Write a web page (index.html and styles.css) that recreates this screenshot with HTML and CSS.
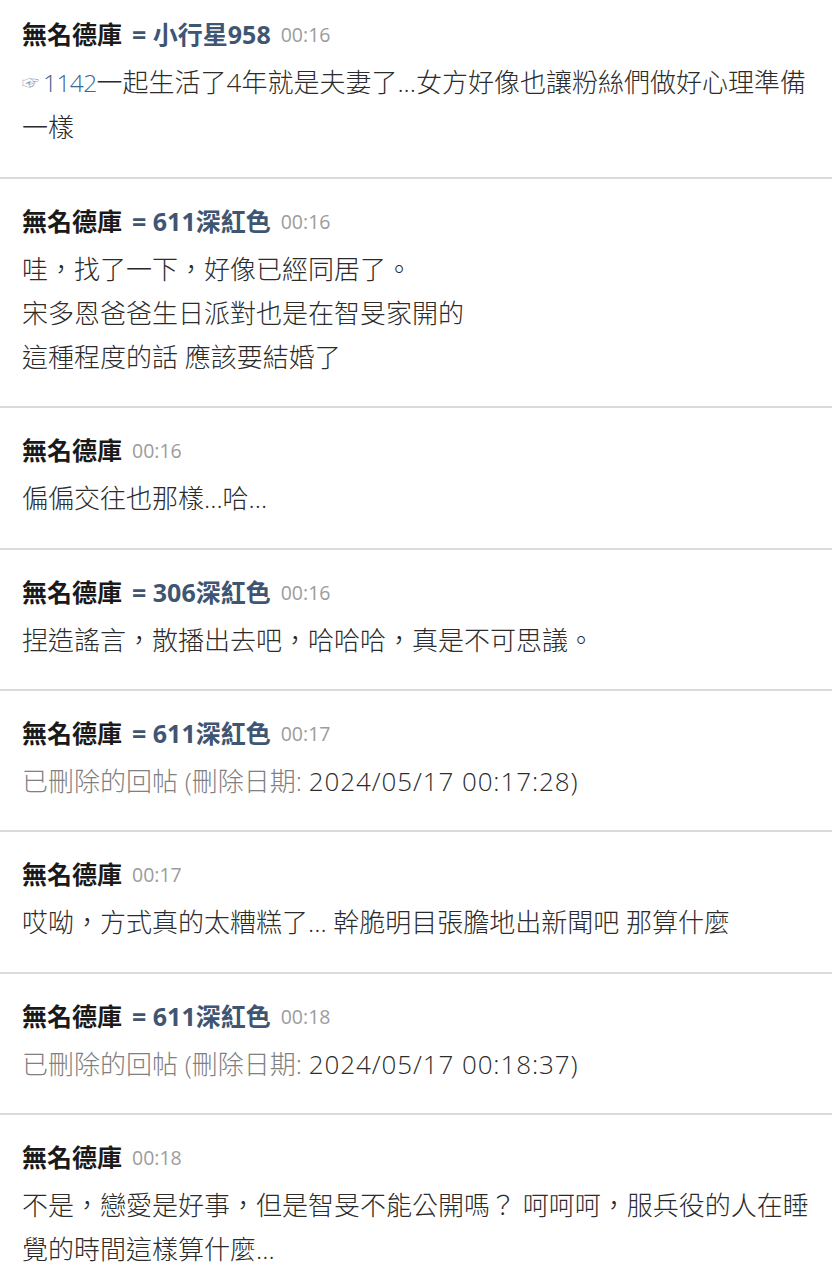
FILE: index.html
```html
<!DOCTYPE html>
<html lang="zh-TW">
<head>
<meta charset="utf-8">
<link rel="stylesheet" href="styles.css">
</head>
<body>
<ul class="comments">
  <li class="comment first">
    <div class="head"><span class="author">無名德庫</span><span class="nick">= 小行星958</span><span class="time">00:16</span></div>
    <div class="body"><span class="hand">☞</span><span class="reply">1142</span>一起生活了4年就是夫妻了...女方好像也讓粉絲們做好心理準備一樣</div>
  </li>
  <li class="comment">
    <div class="head"><span class="author">無名德庫</span><span class="nick">= 611深紅色</span><span class="time">00:16</span></div>
    <div class="body">哇，找了一下，好像已經同居了。<br>宋多恩爸爸生日派對也是在智旻家開的<br>這種程度的話 應該要結婚了</div>
  </li>
  <li class="comment">
    <div class="head"><span class="author">無名德庫</span><span class="time">00:16</span></div>
    <div class="body">偏偏交往也那樣...哈...</div>
  </li>
  <li class="comment">
    <div class="head"><span class="author">無名德庫</span><span class="nick">= 306深紅色</span><span class="time">00:16</span></div>
    <div class="body">捏造謠言，散播出去吧，哈哈哈，真是不可思議。</div>
  </li>
  <li class="comment">
    <div class="head"><span class="author">無名德庫</span><span class="nick">= 611深紅色</span><span class="time">00:17</span></div>
    <div class="body deleted">已刪除的回帖 (刪除日期: <span class="date">2024/05/17 00:17:28)</span></div>
  </li>
  <li class="comment">
    <div class="head"><span class="author">無名德庫</span><span class="time">00:17</span></div>
    <div class="body">哎呦，方式真的太糟糕了... 幹脆明目張膽地出新聞吧 那算什麼</div>
  </li>
  <li class="comment">
    <div class="head"><span class="author">無名德庫</span><span class="nick">= 611深紅色</span><span class="time">00:18</span></div>
    <div class="body deleted">已刪除的回帖 (刪除日期: <span class="date">2024/05/17 00:18:37)</span></div>
  </li>
  <li class="comment">
    <div class="head"><span class="author">無名德庫</span><span class="time">00:18</span></div>
    <div class="body">不是，戀愛是好事，但是智旻不能公開嗎？ 呵呵呵，服兵役的人在睡覺的時間這樣算什麼...</div>
  </li>
</ul>
</body>
</html>
```

FILE: styles.css
```css
html, body {
  margin: 0;
  padding: 0;
  background: #fff;
}
body {
  font-family: "Open Sans", "Noto Sans CJK TC", sans-serif;
  color: #2b2b2b;
  overflow: hidden;
}
.comments {
  list-style: none;
  margin: 0;
  padding: 0;
}
.comment {
  padding: 19px 10px 27px 22px;
  border-top: 2px solid #dadada;
}
.comment.first {
  border-top: none;
  padding-top: 11px;
  padding-bottom: 27px;
}
.head {
  height: 44px;
  display: flex;
  align-items: center;
  gap: 10px;
  white-space: nowrap;
}
.author {
  font-family: "Noto Sans CJK TC", sans-serif;
  font-size: 25px;
  font-weight: 700;
  color: #1a1a1a;
}
.nick {
  font-size: 25px;
  font-weight: 700;
  color: #3f5672;
}
.time {
  font-size: 19.5px;
  color: #9c9c9c;
  margin-top: 3px;
}
.body {
  margin-top: 5px;
  font-size: 26px;
  font-weight: 300;
  line-height: 44.3px;
  color: #2b2b2b;
}
.reply {
  color: #3d6592;
  font-size: 24.5px;
  letter-spacing: -0.6px;
}
.hand {
  display: inline-block;
  font-size: 17px;
  line-height: 1;
  color: #8aa0bd;
  vertical-align: 3px;
  margin-right: 4px;
}
.deleted {
  color: #808080;
}
.deleted .date {
  color: #2b2b2b;
  letter-spacing: 0.9px;
}
```
